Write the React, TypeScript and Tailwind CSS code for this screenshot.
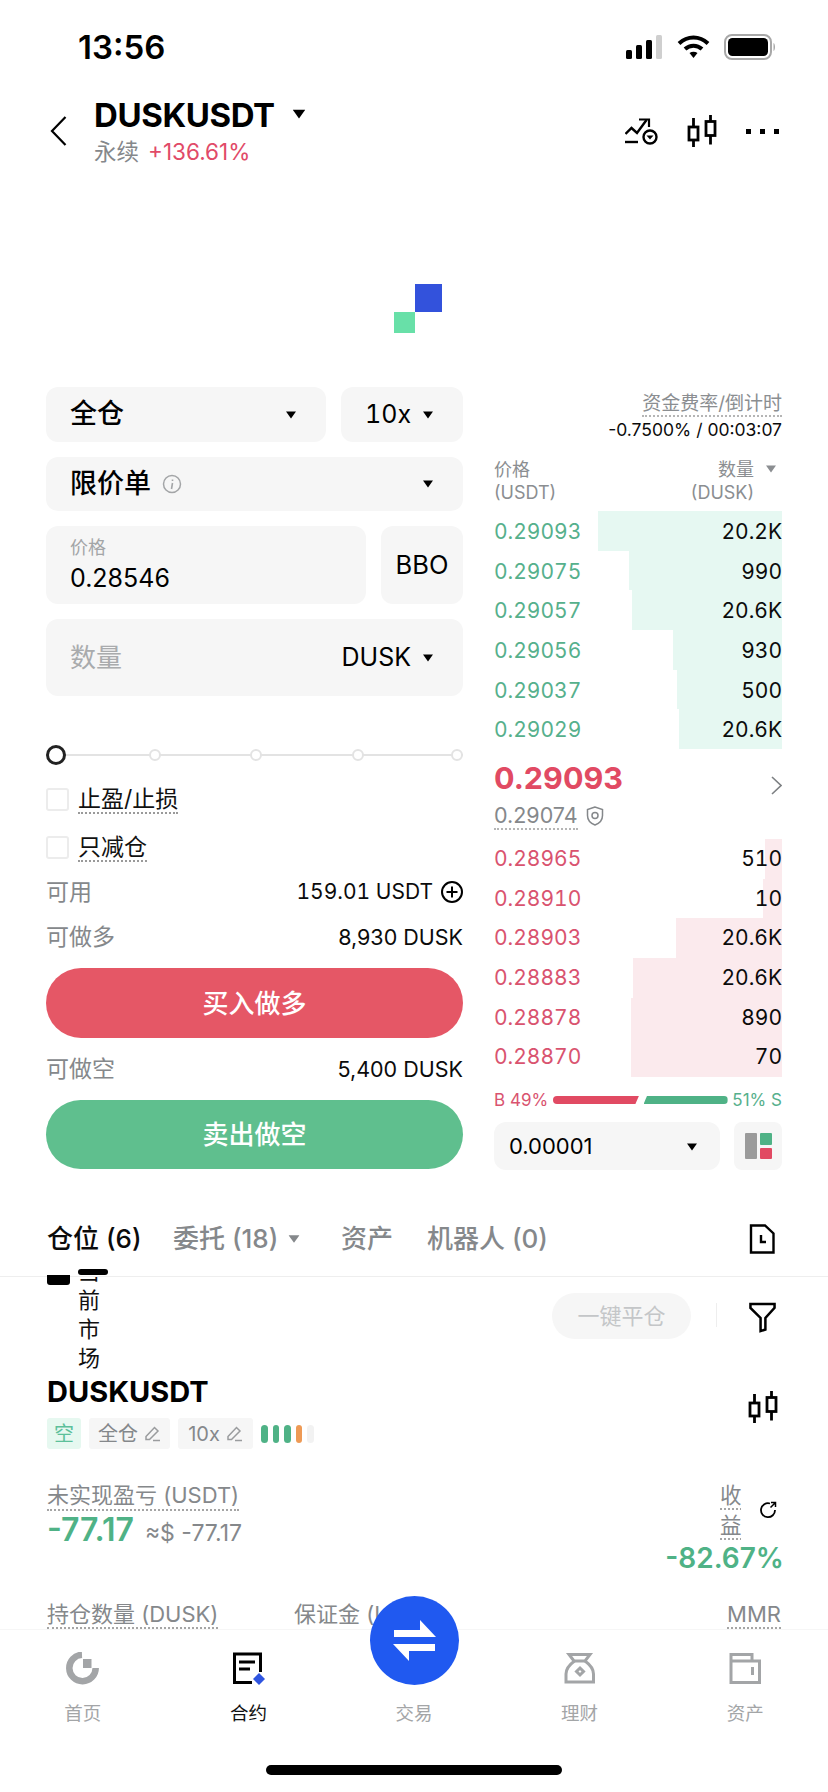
import type { ReactNode } from "react";

const asks = [
  { price: "0.29093", qty: "20.2K", depth: 184 },
  { price: "0.29075", qty: "990", depth: 153 },
  { price: "0.29057", qty: "20.6K", depth: 150 },
  { price: "0.29056", qty: "930", depth: 109 },
  { price: "0.29037", qty: "500", depth: 105 },
  { price: "0.29029", qty: "20.6K", depth: 103 },
];

const bids = [
  { price: "0.28965", qty: "510", depth: 17 },
  { price: "0.28910", qty: "10", depth: 19 },
  { price: "0.28903", qty: "20.6K", depth: 106 },
  { price: "0.28883", qty: "20.6K", depth: 149 },
  { price: "0.28878", qty: "890", depth: 151 },
  { price: "0.28870", qty: "70", depth: 151 },
];

function Caret({ className = "text-black" }: { className?: string }) {
  return (
    <svg width="10" height="8" viewBox="0 0 10 8" className={className}>
      <path d="M0 0.5h10L5 7.5z" fill="currentColor" />
    </svg>
  );
}

function CandleIcon() {
  return (
    <svg width="30" height="32" viewBox="0 0 30 32" fill="none" stroke="#000" strokeWidth="2.8">
      <rect x="2" y="12" width="9" height="13" />
      <path d="M6.500 3v9M6.500 25v7" />
      <rect x="19" y="6.500" width="9" height="14" />
      <path d="M23.500 0v6.500M23.500 20.500v9" />
    </svg>
  );
}

function BookRow({ price, qty, depth, bar, text, row = "" }: { price: string; qty: string; depth: number; bar: string; text: string; row?: string }) {
  return (
    <div className={`relative flex h-[39.67px] items-center justify-between text-[21px] tabular-nums ${row}`}>
      <div className={`absolute inset-y-0 right-0 ${bar}`} style={{ width: depth }} />
      <span className={`relative ${text}`}>{price}</span>
      <span className="relative text-[#0b0b0b]">{qty}</span>
    </div>
  );
}

function SliderDot({ gap }: { gap: string }) {
  return <div className={`relative h-[12px] w-[12px] rounded-full border-2 border-[#e3e3e3] bg-white ${gap}`} />;
}

function Check({ label }: { label: string }) {
  return (
    <div className="flex h-[23px] items-center gap-[9px]">
      <div className="h-[23px] w-[23px] rounded-[3px] border-2 border-[#ececec]" />
      <span className="border-b-2 border-dotted border-[#9a9a9a] text-[23px] leading-[26px] text-[#111]">{label}</span>
    </div>
  );
}

function InfoRow({ label, children }: { label: string; children: ReactNode }) {
  return (
    <div className="flex h-[26px] items-center justify-between leading-[26px]">
      <span className="text-[23px] text-[#85888b]">{label}</span>
      <span className="flex items-center gap-[8px] text-[21.500px] text-[#0b0b0b]">{children}</span>
    </div>
  );
}

function PencilIcon() {
  return (
    <svg width="17" height="17" viewBox="0 0 17 17" fill="none" stroke="#9a9c9e" strokeWidth="1.500">
      <path d="M2 11.500 10.500 2.500l3.500 3.500-8.500 8.500H2zM9 15.500h7" />
    </svg>
  );
}

function NavItem({ icon, label, active }: { icon: ReactNode; label: string; active?: boolean }) {
  return (
    <div className="flex flex-col items-center">
      <div className="flex h-[33px] items-center justify-center">{icon}</div>
      <span className={`mt-[15px] text-[18.500px] leading-[26px] ${active ? "text-[#111]" : "text-[#a3a5a7]"}`}>{label}</span>
    </div>
  );
}

export default function App() {
  return (
    <div className="relative h-[1792px] w-[828px] overflow-hidden bg-white font-['Inter','Noto_Sans_CJK_SC',sans-serif] text-black">
      {/* Status bar */}
      <div className="flex h-[94px] items-center pl-[78px] pr-[52px]">
        <span className="text-[33px] font-semibold leading-none">13:56</span>
        <div className="ml-auto flex items-center gap-[14px]">
          <svg width="37" height="24" viewBox="0 0 37 24">
            <rect x="0" y="15" width="6" height="9" rx="1.500" fill="#000" />
            <rect x="10" y="10" width="6" height="14" rx="1.500" fill="#000" />
            <rect x="20" y="5" width="6" height="19" rx="1.500" fill="#000" />
            <rect x="30" y="0" width="6" height="24" rx="1.500" fill="#cfcfcf" />
          </svg>
          <svg width="33" height="24" viewBox="0 0 33 24" fill="none" stroke="#000" strokeWidth="4">
            <path d="M2 8.500c8.500-8 20.500-8 29 0" />
            <path d="M8 14c5-4.500 12-4.500 17 0" />
            <path d="M12.500 18 16.500 23l4-5c-2.500-1.800-5.500-1.800-8 0z" fill="#000" stroke="none" />
          </svg>
          <svg width="52" height="26" viewBox="0 0 52 26">
            <rect x="1" y="1" width="46" height="24" rx="7" fill="none" stroke="#a8a8a8" strokeWidth="2" />
            <rect x="4" y="4" width="40" height="18" rx="4.500" fill="#000" />
            <path d="M49.500 9c2 .8 2 7.200 0 8z" fill="#a8a8a8" />
          </svg>
        </div>
      </div>

      {/* Header */}
      <div className="flex h-[78px] pl-[50px] pr-[47px]">
        <svg width="17" height="30" viewBox="0 0 17 30" fill="none" stroke="#000" strokeWidth="2.200" className="mt-[22px]">
          <path d="M15.500 1 2 15l13.500 14" />
        </svg>
        <div className="ml-[27px]">
          <div className="flex h-[42px] items-center gap-[19px]">
            <span className="text-[33px] font-bold leading-none tracking-[-0.4px]">DUSKUSDT</span>
            <Caret className="text-black -mt-[3px] scale-125" />
          </div>
          <div className="mt-[-1px] flex h-[34px] items-center gap-[9px] text-[22.500px]">
            <span className="text-[#85888b]">永续</span>
            <span className="text-[#e14a68]">+136.61%</span>
          </div>
        </div>
        <div className="ml-auto flex items-center gap-[29px] self-start pt-[21px]">
          <svg width="33" height="28" viewBox="0 0 33 28" fill="none" stroke="#000" strokeWidth="2.400">
            <path d="M0.500 17l6-6 5.500 5L21.500 3" />
            <path d="M14 2.500h10V10" strokeWidth="2.200" />
            <path d="M0 25h13" />
            <circle cx="25" cy="20" r="6.500" />
            <path d="M21.500 18.500h7L25 22.500z" fill="#000" stroke="none" />
          </svg>
          <CandleIcon />
          <div className="mr-[2px] flex w-[33px] justify-between">
            <div className="h-[5px] w-[5px] bg-black" />
            <div className="h-[5px] w-[5px] bg-black" />
            <div className="h-[5px] w-[5px] bg-black" />
          </div>
        </div>
      </div>

      {/* Logo placeholder for the chart */}
      <div className="h-[215px] pl-[394px] pt-[112px]">
        <svg width="48" height="49" viewBox="0 0 48 49">
          <rect x="21" y="0" width="27" height="28" fill="#3352dc" />
          <rect x="0" y="28" width="21" height="21" fill="#68e0a8" />
        </svg>
      </div>

      {/* Trade form and order book */}
      <div className="flex h-[783px] pl-[46px] pr-[46px]">
        <div className="w-[417px]">
          <div className="flex gap-[15px]">
            <div className="flex h-[55px] flex-1 items-center justify-between rounded-[12px] bg-[#f6f6f6] pl-[24px] pr-[30px] text-[27px] font-medium">
              <span>全仓</span>
              <Caret />
            </div>
            <div className="flex h-[55px] w-[122px] items-center justify-between rounded-[12px] bg-[#f6f6f6] pl-[24px] pr-[30px] text-[25px] tabular-nums">
              <span>10x</span>
              <Caret />
            </div>
          </div>
          <div className="mt-[15px] flex h-[54px] items-center rounded-[12px] bg-[#f6f6f6] pl-[24px] pr-[30px] text-[27px] font-medium">
            <span>限价单</span>
            <svg width="20" height="20" viewBox="0 0 20 20" fill="none" className="ml-[11px]">
              <circle cx="10" cy="10" r="8.500" stroke="#a3a5a7" strokeWidth="1.500" />
              <path d="M10.500 5.500v1.500M10.500 9l-1 6" stroke="#a3a5a7" strokeWidth="1.600" />
            </svg>
            <Caret className="ml-auto text-black" />
          </div>
          <div className="mt-[15px] flex gap-[15px]">
            <div className="flex h-[78px] flex-1 flex-col justify-center rounded-[12px] bg-[#f6f6f6] pl-[24px]">
              <span className="text-[18px] leading-[24px] text-[#a3a5a7]">价格</span>
              <span className="mt-[2px] text-[25px] leading-[32px]">0.28546</span>
            </div>
            <div className="flex h-[78px] w-[82px] items-center justify-center rounded-[12px] bg-[#f6f6f6] text-[25.500px]">BBO</div>
          </div>
          <div className="mt-[15px] flex h-[77px] items-center rounded-[12px] bg-[#f6f6f6] pl-[24px] pr-[30px]">
            <span className="text-[26px] text-[#a9abad]">数量</span>
            <span className="ml-auto text-[25px]">DUSK</span>
            <Caret className="ml-[12px] text-black" />
          </div>

          {/* Leverage slider */}
          <div className="relative mt-[49px] flex h-[20px] items-center">
            <div className="absolute inset-x-0 top-[9px] h-[2px] bg-[#e3e3e3]" />
            <div className="relative h-[20px] w-[20px] rounded-full border-[3px] border-[#222] bg-white" />
            <SliderDot gap="ml-[83px]" />
            <SliderDot gap="ml-[89px]" />
            <SliderDot gap="ml-[90px]" />
            <SliderDot gap="ml-[87px]" />
          </div>

          <div className="mt-[23px]">
            <Check label="止盈/止损" />
          </div>
          <div className="mt-[25px]">
            <Check label="只减仓" />
          </div>
          <div className="mt-[20px]">
            <InfoRow label="可用">
              <span className="text-[21px] tabular-nums">159.01 USDT</span>
              <svg width="22" height="22" viewBox="0 0 22 22" fill="none" stroke="#000" strokeWidth="2">
                <circle cx="11" cy="11" r="10" />
                <path d="M11 5.500v11M5.500 11h11" />
              </svg>
            </InfoRow>
          </div>
          <div className="mt-[19px]">
            <InfoRow label="可做多">8,930 DUSK</InfoRow>
          </div>
          <button className="mt-[18px] flex h-[70px] w-full items-center justify-center rounded-full bg-[#e55766] text-[26px] font-medium text-white">
            买入做多
          </button>
          <div className="mt-[18px]">
            <InfoRow label="可做空">5,400 DUSK</InfoRow>
          </div>
          <button className="mt-[18px] flex h-[69px] w-full items-center justify-center rounded-full bg-[#5fbf8e] text-[26px] font-medium text-white">
            卖出做空
          </button>
        </div>

        {/* Order book */}
        <div className="ml-[31px] w-[288px]">
          <div className="mt-[5px] flex flex-col items-end">
            <span className="border-b-2 border-dotted border-[#b5b5b5] text-[19px] leading-[23px] text-[#8b8e91]">资金费率/倒计时</span>
            <span className="text-[17.500px] leading-[26px] text-[#0b0b0b]">-0.7500% / 00:03:07</span>
          </div>
          <div className="mt-[15px] flex h-[47px] justify-between text-[18px] leading-[23px] text-[#8b8e91]">
            <div>
              <div>价格</div>
              <div>(USDT)</div>
            </div>
            <div className="flex flex-col items-end pr-[28px]">
              <div className="relative">
                数量
                <Caret className="absolute left-[48px] top-[7px] text-[#8b8e91]" />
              </div>
              <div>(DUSK)</div>
            </div>
          </div>
          <div className="mt-[6px]">
            {asks.map((a) => (
              <BookRow key={a.price} {...a} bar="bg-[#e6f8f2]" text="text-[#56b08c]" row="pt-[2px]" />
            ))}
          </div>
          <div className="flex h-[90px] items-start justify-between">
            <div>
              <div className="mt-[10px] text-[30.500px] font-bold leading-[38px] text-[#e14a63]">0.29093</div>
              <div className="mt-[5px] flex items-center gap-[8px]">
                <span className="border-b-2 border-dotted border-[#b5b5b5] text-[21.500px] leading-[26px] text-[#85888b]">0.29074</span>
                <svg width="18" height="20" viewBox="0 0 18 20" fill="none" stroke="#85888b" strokeWidth="1.500">
                  <path d="M9 1 1.500 3.500v6c0 4.500 3.500 8 7.500 9.500 4-1.500 7.500-5 7.500-9.500v-6z" />
                  <circle cx="9" cy="9.500" r="3" />
                </svg>
              </div>
            </div>
            <svg width="11" height="19" viewBox="0 0 11 19" fill="none" stroke="#7d8083" strokeWidth="1.600" className="mt-[27px]">
              <path d="M1 1l9 8.500L1 18" />
            </svg>
          </div>
          <div>
            {bids.map((b) => (
              <BookRow key={b.price} {...b} bar="bg-[#fbeaed]" text="text-[#d9536f]" />
            ))}
          </div>
          <div className="mt-[11px] flex h-[24px] items-center justify-between text-[17px] leading-[24px]">
            <span className="text-[#d9536f]">B 49%</span>
            <div className="h-[8px] w-[86px] rounded-l-full bg-[#e14a63] [clip-path:polygon(0_0,100%_0,96%_100%,0_100%)]" />
            <div className="h-[8px] w-[84px] rounded-r-full bg-[#4fb286] [clip-path:polygon(4%_0,100%_0,100%_100%,0_100%)]" />
            <span className="text-[#56b08c]">51% S</span>
          </div>
          <div className="mt-[10px] flex gap-[14px]">
            <div className="flex h-[48px] w-[226px] items-center justify-between rounded-[12px] bg-[#f6f6f6] pl-[15px] pr-[23px] pt-[2px] text-[22px]">
              <span>0.00001</span>
              <Caret />
            </div>
            <div className="flex h-[48px] w-[48px] items-center justify-center rounded-[8px] bg-[#f6f6f6]">
              <svg width="27" height="26" viewBox="0 0 27 26">
                <rect x="0" y="0" width="12" height="26" rx="1" fill="#9b9b9b" />
                <rect x="15" y="0" width="12" height="12" rx="1" fill="#4fb286" />
                <rect x="15" y="15" width="12" height="11" rx="1" fill="#e14a63" />
              </svg>
            </div>
          </div>
        </div>
      </div>

      {/* Tabs */}
      <div className="mt-[31px] flex h-[76px] items-center border-b border-[#eeeeee] pl-[47px] pr-[53px] pt-[1px] text-[26px] leading-none text-[#85888b]">
        <span className="w-[126px] font-medium text-[#0b0b0b]">仓位 (6)</span>
        <span className="flex w-[168px] items-center gap-[11px] font-medium">
          委托 (18)
          <Caret className="text-[#85888b] scale-110" />
        </span>
        <span className="w-[86px] font-medium">资产</span>
        <span className="font-medium">机器人 (0)</span>
        <svg width="26" height="30" viewBox="0 0 26 30" fill="none" stroke="#000" strokeWidth="2.400" className="ml-auto">
          <path d="M2 1.500h14l8.500 8v19H2z" />
          <path d="M12 11v7h5" />
        </svg>
      </div>

      {/* Position card */}
      <div className="relative h-[420px]">
        <div className="absolute left-[47px] top-[-2px] z-10 h-[10px] w-[23px] rounded-b-[3px] bg-black" />
        <div className="absolute left-[78px] top-[-8px] z-10 h-[6px] w-[30px] rounded-full bg-black" />
        <div className="h-full overflow-hidden px-[47px]">
          <div className="mt-[-20px] flex items-start">
            <div className="ml-[31px] h-[118px] w-[22px] break-all text-[22px] leading-[29px] text-[#111]">当前市场</div>
            <div className="ml-auto mt-[36px] flex h-[46px] w-[139px] items-center justify-center rounded-full bg-[#f6f6f6] text-[22px] text-[#c4c6c8]">
              一键平仓
            </div>
            <div className="ml-[25px] mt-[46px] h-[24px] w-px bg-[#eeeeee]" />
            <svg width="27" height="31" viewBox="0 0 28 31" fill="none" stroke="#000" strokeWidth="2.600" className="ml-[32px] mr-[5px] mt-[45px]">
              <path d="M1.500 1.500h25v4L17 16v12l-5 1.500V16L1.500 5.500z" />
            </svg>
          </div>
          <div className="flex h-[32px] items-center justify-between">
            <span className="text-[29px] font-bold leading-none">DUSKUSDT</span>
            <div className="mr-[3px] mt-[32px]">
              <CandleIcon />
            </div>
          </div>
          <div className="mt-[11px] flex h-[31px] items-center text-[20px] text-[#85888b]">
            <span className="flex h-[31px] w-[34px] items-center justify-center rounded-[3px] bg-[#e6f8f0] text-[#5cc09a]">空</span>
            <span className="ml-[8px] flex h-[31px] w-[81px] items-center justify-center gap-[6px] rounded-[3px] bg-[#f6f6f6]">
              全仓
              <PencilIcon />
            </span>
            <span className="ml-[8px] flex h-[31px] w-[75px] items-center justify-center gap-[6px] rounded-[3px] bg-[#f6f6f6]">
              10x
              <PencilIcon />
            </span>
            <div className="ml-[8px] flex gap-[5px]">
              <div className="h-[18px] w-[6.500px] rounded-full bg-[#4fb286]" />
              <div className="h-[18px] w-[6.500px] rounded-full bg-[#4fb286]" />
              <div className="h-[18px] w-[6.500px] rounded-full bg-[#4fb286]" />
              <div className="h-[18px] w-[6.500px] rounded-full bg-[#ee9a55]" />
              <div className="h-[18px] w-[6.500px] rounded-full bg-[#f2f2f2]" />
            </div>
          </div>
          <div className="mt-[31px] flex items-start justify-between">
            <div>
              <div className="mt-[1px] inline-block border-b-2 border-dotted border-[#a5a5a5] text-[22px] leading-[28px] text-[#85888b]">未实现盈亏 (USDT)</div>
              <div className="mt-[1px] flex items-baseline gap-[11px]">
                <span className="text-[32px] font-semibold leading-[36px] text-[#4fb286]">-77.17</span>
                <span className="text-[23px] text-[#85888b]">≈$ -77.17</span>
              </div>
            </div>
            <div className="flex flex-col items-end">
              <div className="mr-[4px] flex items-center gap-[17px]">
                <div className="w-[22px] break-all text-[21.500px] leading-[30px] text-[#85888b] underline decoration-dotted decoration-[#a5a5a5] underline-offset-[5px]">收益</div>
                <svg width="18" height="18" viewBox="0 0 18 18" fill="none" stroke="#000" strokeWidth="1.800">
                  <path d="M11 2.500A7 7 0 1 0 16 9" />
                  <path d="M11.500 6.500 16 2M12 1.500h4.500V6" strokeWidth="1.500" />
                </svg>
              </div>
              <div className="mr-[-3px] mt-[1px] text-[28px] font-semibold leading-[34px] text-[#4fb286]">-82.67%</div>
            </div>
          </div>
          <div className="mt-[26px] flex h-[28px] text-[22px] leading-[26px] text-[#85888b]">
            <span className="w-[247px]">
              <span className="inline-block border-b-2 border-dotted border-[#a5a5a5]">持仓数量 (DUSK)</span>
            </span>
            <span>保证金 (USDT)</span>
            <span className="ml-auto border-b-2 border-dotted border-[#a5a5a5]">MMR</span>
          </div>
        </div>
      </div>

      {/* Bottom navigation, sits over the scrolling card */}
      <div className="absolute inset-x-0 bottom-0 h-[163px] border-t border-[#f6f6f6] bg-white pt-[22px]">
        <div className="grid grid-cols-5">
          <NavItem
            label="首页"
            icon={
              <svg width="33" height="33" viewBox="0 0 33 33" fill="none">
                <path d="M16 2.800A13.200 13.200 0 1 0 29.700 16" stroke="#a3a5a7" strokeWidth="6.500" />
                <rect x="17" y="7" width="8.500" height="9" fill="#a3a5a7" />
              </svg>
            }
          />
          <NavItem
            active
            label="合约"
            icon={
              <svg width="34" height="33" viewBox="0 0 34 33" fill="none" className="ml-[3px]">
                <path d="M27.500 20V2H1.500v28.500H19" stroke="#000" strokeWidth="3" />
                <path d="M6 10h16M6 17h11" stroke="#000" strokeWidth="3" />
                <path d="M26 21l6 6-6 6-6-6z" fill="#2f55e0" />
              </svg>
            }
          />
          <NavItem label="交易" icon={<div className="h-[33px] w-[33px]" />} />
          <NavItem
            label="理财"
            icon={
              <svg width="32" height="33" viewBox="0 0 32 33" fill="none" stroke="#a3a5a7" strokeWidth="3">
                <path d="M5 2.500h21l-5 6.500h-11z" />
                <path d="M10.500 9C5 13 2 17 2 22v8h27.500v-8c0-5-3-9-8.500-13" />
                <path d="M16 16l3.500 3.500L16 23l-3.500-3.500z" />
              </svg>
            }
          />
          <NavItem
            label="资产"
            icon={
              <svg width="33" height="33" viewBox="0 0 33 33" fill="none" stroke="#a3a5a7" strokeWidth="3">
                <path d="M2 9V2.500h21V9M2 9h28.500v21.500H2z" />
                <path d="M23.500 15v8" />
              </svg>
            }
          />
        </div>
        <div className="mx-auto mt-[39px] h-[10px] w-[296px] rounded-full bg-black" />
      </div>

      {/* Floating trade button */}
      <div className="absolute left-[370px] top-[1596px] flex h-[89px] w-[89px] items-center justify-center rounded-full bg-[#2059f0]">
        <svg width="89" height="89" viewBox="0 0 89 89">
          <path d="M50 24 66 41H24V34H50zM39 65 23 48H65V55H39z" fill="#fff" />
        </svg>
      </div>
    </div>
  );
}
